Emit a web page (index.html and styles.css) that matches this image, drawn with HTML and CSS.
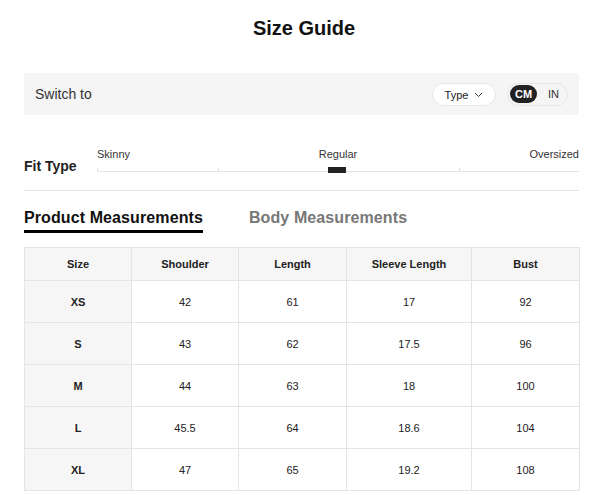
FILE: index.html
```html
<!DOCTYPE html>
<html>
<head>
<meta charset="utf-8">
<link rel="stylesheet" href="styles.css">
</head>
<body>
<div class="page">
  <h1 class="title">Size Guide</h1>

  <div class="switch-bar">
    <span class="switch-label">Switch to</span>
    <div class="switch-controls">
      <div class="type-pill">Type
        <svg class="chev" width="9" height="6" viewBox="0 0 9 6"><path d="M1 1 L4.5 4.5 L8 1" fill="none" stroke="#333" stroke-width="1"/></svg>
      </div>
      <div class="unit-pill">
        <span class="unit active">CM</span>
        <span class="unit">IN</span>
      </div>
    </div>
  </div>

  <div class="fit">
    <div class="fit-label">Fit Type</div>
    <div class="scale">
      <div class="scale-labels">
        <span class="lbl-left">Skinny</span>
        <span class="lbl-mid">Regular</span>
        <span class="lbl-right">Oversized</span>
      </div>
      <div class="track">
        <div class="seg"></div>
        <div class="seg"></div>
        <div class="seg"></div>
        <div class="seg"></div>
        <div class="marker"></div>
      </div>
    </div>
  </div>

  <div class="tabs">
    <div class="tab active">Product Measurements</div>
    <div class="tab">Body Measurements</div>
  </div>

  <table class="size-table">
    <colgroup>
      <col class="c1"><col class="c2"><col class="c3"><col class="c4"><col class="c5">
    </colgroup>
    <thead>
      <tr><th>Size</th><th>Shoulder</th><th>Length</th><th>Sleeve Length</th><th>Bust</th></tr>
    </thead>
    <tbody>
      <tr><th>XS</th><td>42</td><td>61</td><td>17</td><td>92</td></tr>
      <tr><th>S</th><td>43</td><td>62</td><td>17.5</td><td>96</td></tr>
      <tr><th>M</th><td>44</td><td>63</td><td>18</td><td>100</td></tr>
      <tr><th>L</th><td>45.5</td><td>64</td><td>18.6</td><td>104</td></tr>
      <tr><th>XL</th><td>47</td><td>65</td><td>19.2</td><td>108</td></tr>
    </tbody>
  </table>
</div>
</body>
</html>
```
FILE: styles.css
```css
* { box-sizing: border-box; }
html, body { margin: 0; padding: 0; background: #fff; }
body {
  font-family: "Liberation Sans", Arial, sans-serif;
  color: #222;
}
.page {
  width: 555px;
  margin-left: 24px;
}
.title {
  margin: 0;
  height: 73px;
  padding-top: 17px;
  padding-left: 5px;
  font-size: 20px;
  line-height: 23px;
  font-weight: bold;
  text-align: center;
  color: #111;
}
.switch-bar {
  height: 42px;
  background: #f5f5f5;
  display: flex;
  align-items: center;
  justify-content: space-between;
  padding: 0 11px;
}
.switch-label {
  font-size: 14px;
  color: #333;
}
.switch-controls {
  display: flex;
  align-items: center;
  gap: 11px;
}
.type-pill {
  height: 23px;
  width: 64px;
  border: 1px solid #e6e6e6;
  border-radius: 12px;
  background: #fff;
  display: flex;
  align-items: center;
  justify-content: center;
  gap: 6px;
  font-size: 11px;
  color: #222;
  padding-top: 1px;
}
.chev { margin-top: 1px; }
.unit-pill {
  height: 23px;
  width: 61px;
  border: 1px solid #e6e6e6;
  border-radius: 12px;
  display: flex;
  align-items: center;
  padding: 0 2px;
  gap: 5px;
}
.unit {
  font-size: 11px;
  line-height: 18px;
  height: 18px;
  color: #333;
  padding: 0 6px;
  border-radius: 9px;
}
.unit.active {
  background: #222;
  color: #fff;
  font-weight: bold;
  width: 30px;
  text-align: center;
  padding: 0;
}
.fit {
  display: flex;
  align-items: flex-end;
  padding-top: 32px;
  padding-bottom: 17px;
  border-bottom: 1px solid #e5e5e5;
}
.fit-label {
  width: 73px;
  font-size: 14px;
  font-weight: bold;
  line-height: 16px;
  color: #222;
  margin-bottom: -1px;
}
.scale { flex: 1; }
.scale-labels {
  display: grid;
  grid-template-columns: 1fr auto 1fr;
  font-size: 11px;
  line-height: 14px;
  color: #333;
}
.lbl-left { text-align: left; }
.lbl-mid { text-align: center; }
.lbl-right { text-align: right; }
.track {
  position: relative;
  display: flex;
  height: 12px;
}
.seg {
  flex: 1;
  height: 11px;
  border-bottom: 1px solid #e5e5e5;
  background: linear-gradient(#e0e0e0, #e0e0e0) left 7px / 1px 4px no-repeat;
}
.seg:last-of-type {
  background:
    linear-gradient(#e0e0e0, #e0e0e0) left 7px / 1px 4px no-repeat,
    linear-gradient(#e0e0e0, #e0e0e0) right 7px / 1px 4px no-repeat;
}
.marker {
  position: absolute;
  left: 231px;
  top: 6px;
  width: 18px;
  height: 6px;
  background: #222;
}
.tabs {
  display: flex;
  gap: 46px;
  padding-top: 17px;
}
.tab {
  font-size: 16px;
  line-height: 20px;
  font-weight: bold;
  color: #777;
  padding-bottom: 2px;
  letter-spacing: 0.1px;
}
.tab.active {
  color: #111;
  border-bottom: 3px solid #000;
}
.size-table {
  margin-top: 14px;
  width: 555px;
  border-collapse: collapse;
  table-layout: fixed;
  font-size: 11px;
}
.c1 { width: 107px; }
.c2 { width: 107px; }
.c3 { width: 108px; }
.c4 { width: 125px; }
.c5 { width: 108px; }
.size-table th, .size-table td {
  border: 1px solid #e5e5e5;
  text-align: center;
  color: #222;
  padding: 0;
}
.size-table thead th {
  height: 33px;
  background: #f6f6f6;
  font-weight: bold;
}
.size-table tbody tr { height: 42px; }
.size-table tbody th {
  background: #f6f6f6;
  font-weight: bold;
}
```
